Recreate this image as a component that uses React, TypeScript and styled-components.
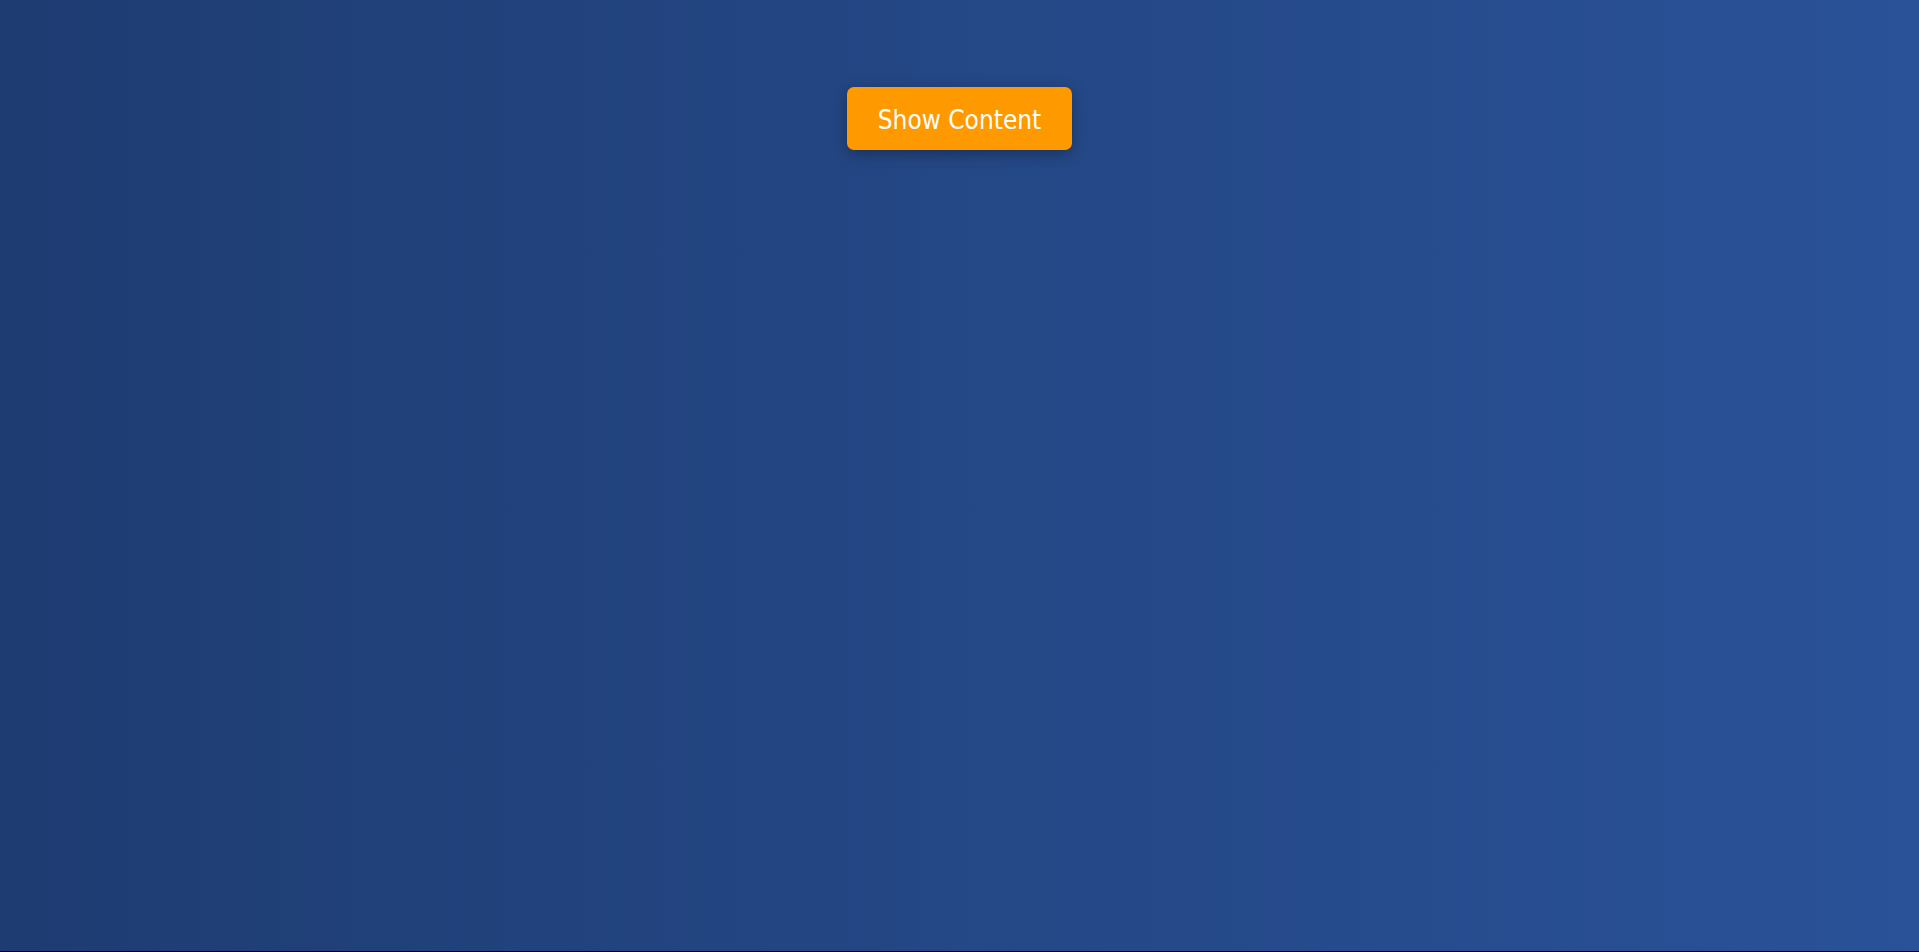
import React from "react"
import styled, { createGlobalStyle } from "styled-components"

const GlobalStyle = createGlobalStyle`
  html, body {
    margin: 0;
    padding: 0;
    background: #000;
  }
`

const Page = styled.div`
  display: flex;
  flex-flow: column;
  align-items: center;
  height: 951px;
  padding-top: 87px;
  box-sizing: border-box;
  background: linear-gradient(to right, #1e3c72, #2a5298);
`

const ShowButton = styled.button`
  height: 63px;
  padding: 2px 31px 0;
  border: none;
  border-radius: 7px;
  background: #ff9900;
  color: #fff;
  font-family: "DejaVu Sans Condensed", "DejaVu Sans", sans-serif;
  font-size: 26px;
  box-shadow: 0 4px 15px rgba(0, 0, 0, 0.3);
  cursor: pointer;
`

const App = () => {
  return (
    <>
      <GlobalStyle />
      <Page>
        <ShowButton>Show Content</ShowButton>
      </Page>
    </>
  )
}

export default App
